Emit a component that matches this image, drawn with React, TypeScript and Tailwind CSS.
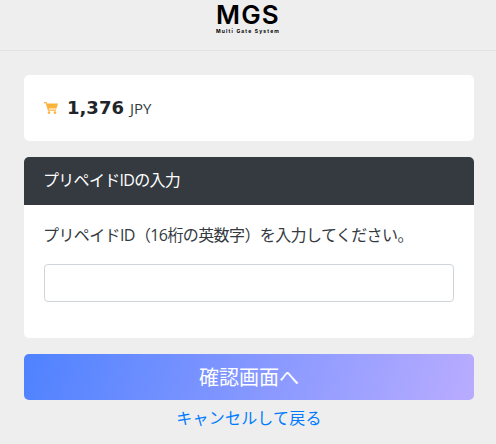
import React from 'react';

const jp = "font-['Open_Sans','Noto_Sans_CJK_JP',sans-serif]";

const CartIcon = () => (
  <svg viewBox="0 0 14 12" className="h-3 w-[14px] fill-[#fbb33c]">
    <path d="M0 0h2.6l.5 1.4H14l-1.5 5.2H4.7l.3 1h7.2v1.2H4L1.7 1.2H0z" />
    <circle cx="5" cy="10.6" r="1.3" />
    <circle cx="11" cy="10.6" r="1.3" />
  </svg>
);

export default function App() {
  return (
    <div className={`h-[444px] w-[496px] overflow-hidden bg-[#eeeeee] font-light text-[#212529] ${jp}`}>
      <header className="flex h-[51px] flex-col items-center border-b border-[#e2e2e6] pt-[2px]">
        <div className="font-['Inter',sans-serif] text-[26px] font-semibold leading-[26px] tracking-[1.2px] text-black">MGS</div>
        <div className="font-['Inter',sans-serif] text-[5px] font-bold leading-[6px] tracking-[1.15px] text-black">Multi Gate System</div>
      </header>

      <main className="flex flex-col pl-6 pr-[22px] pt-6">
        <section className="flex h-[66px] items-center rounded-[5px] bg-white pl-5 pr-5">
          <CartIcon />
          <span className="ml-[9px] font-['DejaVu_Sans',sans-serif] text-[18px] font-bold leading-none">1,376</span>
          <span className="ml-[6px] text-[15px] font-normal leading-none text-[#343a40]">JPY</span>
        </section>

        <section className="mt-4 h-[181px] overflow-hidden rounded-[5px] bg-white">
          <h2 className="flex h-12 items-center bg-[#343a40] pb-[2px] pl-[19px] pr-5 text-[16px] font-normal tracking-[-0.7px] text-white">プリペイドIDの入力</h2>
          <div className="px-5 pt-[18px]">
            <p className="-ml-px text-[16px] font-normal leading-6 tracking-[-0.6px] text-[#343a40]">プリペイドID（16桁の英数字）を入力してください。</p>
            <input className="mt-[17px] block h-[38px] w-full rounded-[4px] border border-[#ced4da] bg-white px-3" type="text" />
          </div>
        </section>

        <button className="mt-4 h-[46px] w-full rounded-[5px] bg-[linear-gradient(105deg,#4f82ff,#b9acff)] pt-[2px] text-[20px] font-normal text-white">確認画面へ</button>
        <a className="mt-[6px] block text-center text-[16px] font-normal leading-6 tracking-[0.2px] text-[#007bff]" href="#">キャンセルして戻る</a>
      </main>
    </div>
  );
}
